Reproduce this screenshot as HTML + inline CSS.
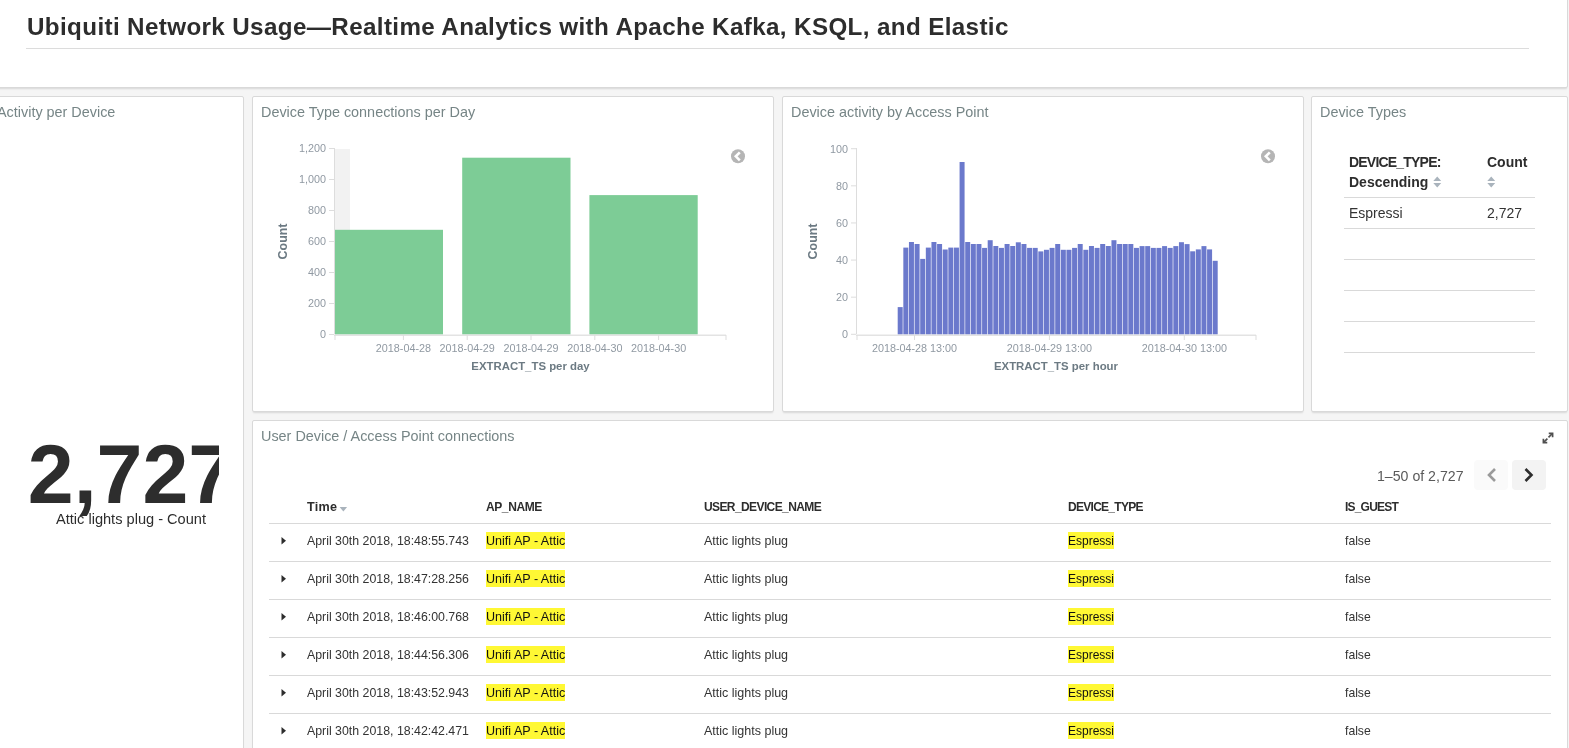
<!DOCTYPE html><html><head><meta charset="utf-8"><title>Ubiquiti Network Usage</title><style>
*{box-sizing:border-box;margin:0;padding:0}
html,body{width:1569px;height:748px;overflow:hidden;background:#F5F5F5;font-family:"Liberation Sans",sans-serif;}
.t,svg{will-change:transform}
.p{position:absolute;background:#fff;border:1px solid #D9D9D9;border-radius:2px;box-shadow:0 2px 2px -1px rgba(0,0,0,.12)}
.t{position:absolute;white-space:nowrap;line-height:1}
.ttl{font-size:14.4px;color:#768586}
.ln{position:absolute;height:1px;background:#D9D9D9}
.tick{fill:#9099A2;font-size:10.8px;font-family:"Liberation Sans",sans-serif}
.hdr{font-size:11px;font-weight:bold;color:#2D2D2D}
.cell{font-size:12.35px;color:#333}
mark{background:#FFF834;color:#111;padding:0}
</style></head><body><div class="p" style="left:-10px;top:-10px;width:1578px;height:98px"></div>
<div class="t " style="left:27.00px;top:14.51px;font-size:24.2px;font-weight:bold;color:#2D2D2D;letter-spacing:0.375px">Ubiquiti Network Usage—Realtime Analytics with Apache Kafka, KSQL, and Elastic</div>
<div class="ln" style="left:26px;top:48px;width:1503px;background:#DCDCDC"></div>
<div class="p" style="left:-10px;top:96px;width:254px;height:700px"></div>
<div class="t ttl" style="right:1454.00px;top:104.81px;font-size:14.4px;">Activity per Device</div>
<div style="position:absolute;left:0;top:420px;width:219px;height:100px;overflow:hidden"><div class="t" style="left:131.4px;top:13.36px;transform:translateX(-50%);font-size:82.5px;font-weight:bold;color:#2D2D2D">2,727</div></div>
<div class="t " style="left:131.00px;transform:translateX(-50%);top:511.64px;font-size:14.6px;color:#2D2D2D">Attic lights plug - Count</div>
<div class="p" style="left:252px;top:96px;width:522px;height:316px"></div><div class="t ttl" style="left:261.00px;top:104.81px;font-size:14.4px;">Device Type connections per Day</div>
<div class="p" style="left:782px;top:96px;width:522px;height:316px"></div><div class="t ttl" style="left:791.00px;top:104.81px;font-size:14.4px;">Device activity by Access Point</div>
<svg style="position:absolute;left:252px;top:96px" width="522" height="316"><rect x="83" y="53" width="15" height="185" fill="#F2F2F2"/><rect x="83.00" y="133.80" width="108.00" height="104.70" fill="#7DCC96"/><rect x="210.20" y="61.70" width="108.30" height="176.80" fill="#7DCC96"/><rect x="337.40" y="99.10" width="108.30" height="139.40" fill="#7DCC96"/><rect x="82" y="52" width="1" height="186" fill="#DDD"/><rect x="82" y="238.5" width="392" height="1.5" fill="#E3E3E3"/><rect x="77" y="238" width="5" height="1" fill="#DDD"/><text class="tick" x="74" y="242" text-anchor="end">0</text><rect x="77" y="207" width="5" height="1" fill="#DDD"/><text class="tick" x="74" y="211" text-anchor="end">200</text><rect x="77" y="176" width="5" height="1" fill="#DDD"/><text class="tick" x="74" y="180" text-anchor="end">400</text><rect x="77" y="145" width="5" height="1" fill="#DDD"/><text class="tick" x="74" y="149" text-anchor="end">600</text><rect x="77" y="114" width="5" height="1" fill="#DDD"/><text class="tick" x="74" y="118" text-anchor="end">800</text><rect x="77" y="83" width="5" height="1" fill="#DDD"/><text class="tick" x="74" y="87" text-anchor="end">1,000</text><rect x="77" y="52" width="5" height="1" fill="#DDD"/><text class="tick" x="74" y="56" text-anchor="end">1,200</text><rect x="82.50" y="239" width="1" height="5" fill="#DDD"/><rect x="150.90" y="239" width="1" height="5" fill="#DDD"/><rect x="214.70" y="239" width="1" height="5" fill="#DDD"/><rect x="278.50" y="239" width="1" height="5" fill="#DDD"/><rect x="342.30" y="239" width="1" height="5" fill="#DDD"/><rect x="406.10" y="239" width="1" height="5" fill="#DDD"/><rect x="473.50" y="239" width="1" height="5" fill="#DDD"/><text class="tick" x="151.40" y="255.80" text-anchor="middle">2018-04-28</text><text class="tick" x="215.20" y="255.80" text-anchor="middle">2018-04-29</text><text class="tick" x="279.00" y="255.80" text-anchor="middle">2018-04-29</text><text class="tick" x="342.80" y="255.80" text-anchor="middle">2018-04-30</text><text class="tick" x="406.60" y="255.80" text-anchor="middle">2018-04-30</text><text x="278.5" y="273.6" text-anchor="middle" style="font-family:'Liberation Sans';font-size:11.4px;font-weight:bold;fill:#6C7A83">EXTRACT_TS per day</text><text transform="translate(35.39999999999998,145.5) rotate(-90)" text-anchor="middle" style="font-family:'Liberation Sans';font-size:12.4px;font-weight:bold;fill:#6C7A83">Count</text><circle cx="486" cy="60.30000000000001" r="7" fill="#B5B5B5"/><path d="M487.79999999999995,56.30000000000001 L483.79999999999995,60.30000000000001 L487.79999999999995,64.30000000000001" stroke="#fff" stroke-width="2.6" fill="none"/></svg>
<svg style="position:absolute;left:782px;top:96px" width="522" height="316"><rect x="115.70" y="211.10" width="5" height="27.40" fill="#6B79CC"/><rect x="121.33" y="151.60" width="5" height="86.90" fill="#6B79CC"/><rect x="126.95" y="146.00" width="5" height="92.50" fill="#6B79CC"/><rect x="132.58" y="148.00" width="5" height="90.50" fill="#6B79CC"/><rect x="138.20" y="162.90" width="5" height="75.60" fill="#6B79CC"/><rect x="143.83" y="151.60" width="5" height="86.90" fill="#6B79CC"/><rect x="149.45" y="146.00" width="5" height="92.50" fill="#6B79CC"/><rect x="155.08" y="148.00" width="5" height="90.50" fill="#6B79CC"/><rect x="160.70" y="153.50" width="5" height="85.00" fill="#6B79CC"/><rect x="166.33" y="151.60" width="5" height="86.90" fill="#6B79CC"/><rect x="171.95" y="151.60" width="5" height="86.90" fill="#6B79CC"/><rect x="177.58" y="66.00" width="5" height="172.50" fill="#6B79CC"/><rect x="183.20" y="146.00" width="5" height="92.50" fill="#6B79CC"/><rect x="188.83" y="148.00" width="5" height="90.50" fill="#6B79CC"/><rect x="194.45" y="148.00" width="5" height="90.50" fill="#6B79CC"/><rect x="200.08" y="151.90" width="5" height="86.60" fill="#6B79CC"/><rect x="205.70" y="144.20" width="5" height="94.30" fill="#6B79CC"/><rect x="211.33" y="150.00" width="5" height="88.50" fill="#6B79CC"/><rect x="216.95" y="151.90" width="5" height="86.60" fill="#6B79CC"/><rect x="222.58" y="148.00" width="5" height="90.50" fill="#6B79CC"/><rect x="228.20" y="150.00" width="5" height="88.50" fill="#6B79CC"/><rect x="233.83" y="146.30" width="5" height="92.20" fill="#6B79CC"/><rect x="239.45" y="148.00" width="5" height="90.50" fill="#6B79CC"/><rect x="245.08" y="151.90" width="5" height="86.60" fill="#6B79CC"/><rect x="250.70" y="151.90" width="5" height="86.60" fill="#6B79CC"/><rect x="256.33" y="155.40" width="5" height="83.10" fill="#6B79CC"/><rect x="261.95" y="153.80" width="5" height="84.70" fill="#6B79CC"/><rect x="267.58" y="151.90" width="5" height="86.60" fill="#6B79CC"/><rect x="273.20" y="148.00" width="5" height="90.50" fill="#6B79CC"/><rect x="278.83" y="153.80" width="5" height="84.70" fill="#6B79CC"/><rect x="284.45" y="153.80" width="5" height="84.70" fill="#6B79CC"/><rect x="290.08" y="151.90" width="5" height="86.60" fill="#6B79CC"/><rect x="295.70" y="148.00" width="5" height="90.50" fill="#6B79CC"/><rect x="301.33" y="153.80" width="5" height="84.70" fill="#6B79CC"/><rect x="306.95" y="150.00" width="5" height="88.50" fill="#6B79CC"/><rect x="312.58" y="151.90" width="5" height="86.60" fill="#6B79CC"/><rect x="318.20" y="148.00" width="5" height="90.50" fill="#6B79CC"/><rect x="323.83" y="150.00" width="5" height="88.50" fill="#6B79CC"/><rect x="329.45" y="144.20" width="5" height="94.30" fill="#6B79CC"/><rect x="335.08" y="148.00" width="5" height="90.50" fill="#6B79CC"/><rect x="340.70" y="148.00" width="5" height="90.50" fill="#6B79CC"/><rect x="346.33" y="148.00" width="5" height="90.50" fill="#6B79CC"/><rect x="351.95" y="151.90" width="5" height="86.60" fill="#6B79CC"/><rect x="357.58" y="150.10" width="5" height="88.40" fill="#6B79CC"/><rect x="363.20" y="150.10" width="5" height="88.40" fill="#6B79CC"/><rect x="368.83" y="151.90" width="5" height="86.60" fill="#6B79CC"/><rect x="374.45" y="151.90" width="5" height="86.60" fill="#6B79CC"/><rect x="380.08" y="150.10" width="5" height="88.40" fill="#6B79CC"/><rect x="385.70" y="151.90" width="5" height="86.60" fill="#6B79CC"/><rect x="391.33" y="150.10" width="5" height="88.40" fill="#6B79CC"/><rect x="396.95" y="146.20" width="5" height="92.30" fill="#6B79CC"/><rect x="402.58" y="148.10" width="5" height="90.40" fill="#6B79CC"/><rect x="408.20" y="155.30" width="5" height="83.20" fill="#6B79CC"/><rect x="413.83" y="153.40" width="5" height="85.10" fill="#6B79CC"/><rect x="419.45" y="150.10" width="5" height="88.40" fill="#6B79CC"/><rect x="425.08" y="153.40" width="5" height="85.10" fill="#6B79CC"/><rect x="430.70" y="164.80" width="5" height="73.70" fill="#6B79CC"/><rect x="74" y="52" width="1" height="186" fill="#DDD"/><rect x="74" y="238.5" width="400" height="1.5" fill="#E3E3E3"/><rect x="69" y="237.80" width="5" height="1" fill="#DDD"/><text class="tick" x="66" y="242.30" text-anchor="end">0</text><rect x="69" y="200.68" width="5" height="1" fill="#DDD"/><text class="tick" x="66" y="205.18" text-anchor="end">20</text><rect x="69" y="163.56" width="5" height="1" fill="#DDD"/><text class="tick" x="66" y="168.06" text-anchor="end">40</text><rect x="69" y="126.44" width="5" height="1" fill="#DDD"/><text class="tick" x="66" y="130.94" text-anchor="end">60</text><rect x="69" y="89.32" width="5" height="1" fill="#DDD"/><text class="tick" x="66" y="93.82" text-anchor="end">80</text><rect x="69" y="52.20" width="5" height="1" fill="#DDD"/><text class="tick" x="66" y="56.70" text-anchor="end">100</text><rect x="74.50" y="239" width="1" height="5" fill="#DDD"/><rect x="132.00" y="239" width="1" height="5" fill="#DDD"/><rect x="266.90" y="239" width="1" height="5" fill="#DDD"/><rect x="401.80" y="239" width="1" height="5" fill="#DDD"/><rect x="473.50" y="239" width="1" height="5" fill="#DDD"/><text class="tick" x="132.50" y="255.80" text-anchor="middle">2018-04-28 13:00</text><text class="tick" x="267.40" y="255.80" text-anchor="middle">2018-04-29 13:00</text><text class="tick" x="402.30" y="255.80" text-anchor="middle">2018-04-30 13:00</text><text x="274" y="273.6" text-anchor="middle" style="font-family:'Liberation Sans';font-size:11.4px;font-weight:bold;fill:#6C7A83">EXTRACT_TS per hour</text><text transform="translate(35.39999999999998,145.5) rotate(-90)" text-anchor="middle" style="font-family:'Liberation Sans';font-size:12.4px;font-weight:bold;fill:#6C7A83">Count</text><circle cx="486" cy="60.30000000000001" r="7" fill="#B5B5B5"/><path d="M487.79999999999995,56.30000000000001 L483.79999999999995,60.30000000000001 L487.79999999999995,64.30000000000001" stroke="#fff" stroke-width="2.6" fill="none"/></svg>
<div class="p" style="left:1311px;top:96px;width:257px;height:316px"></div>
<div class="t ttl" style="left:1320.00px;top:104.81px;font-size:14.4px;">Device Types</div>
<div class="t " style="left:1348.70px;top:154.95px;font-size:14px;font-weight:bold;color:#2D2D2D;letter-spacing:-0.8px">DEVICE_TYPE:</div>
<div class="t " style="left:1348.90px;top:174.65px;font-size:14px;font-weight:bold;color:#2D2D2D">Descending</div>
<div class="t " style="left:1487.00px;top:154.95px;font-size:14px;font-weight:bold;color:#2D2D2D">Count</div>
<svg style="position:absolute;left:1433px;top:176px" width="9" height="12"><path d="M4.25,0.6 L8.2,5 L0.3,5 Z M0.3,7 L8.2,7 L4.25,11.4 Z" fill="#A9B3BC"/></svg>
<svg style="position:absolute;left:1486.6px;top:176px" width="9" height="12"><path d="M4.25,0.6 L8.2,5 L0.3,5 Z M0.3,7 L8.2,7 L4.25,11.4 Z" fill="#A9B3BC"/></svg>
<div class="ln" style="left:1344px;top:197px;width:191px"></div>
<div class="ln" style="left:1344px;top:228px;width:191px"></div>
<div class="ln" style="left:1344px;top:259px;width:191px"></div>
<div class="ln" style="left:1344px;top:290px;width:191px"></div>
<div class="ln" style="left:1344px;top:321px;width:191px"></div>
<div class="ln" style="left:1344px;top:352px;width:191px"></div>
<div class="t " style="left:1348.90px;top:206.15px;font-size:14px;color:#333">Espressi</div>
<div class="t " style="left:1487.00px;top:206.15px;font-size:14px;color:#333">2,727</div>
<div class="p" style="left:252px;top:420px;width:1316px;height:400px"></div>
<div class="t ttl" style="left:261.00px;top:428.61px;font-size:14.4px;">User Device / Access Point connections</div>
<svg style="position:absolute;left:1542px;top:432px" width="12" height="12"><g stroke="#505050" stroke-width="1.7" fill="none"><path stroke-linecap="square" d="M7.6,1.3 L10.6,1.3 L10.6,4.3 M1.4,7.6 L1.4,10.6 L4.4,10.6"/><path d="M10.4,1.5 L6.5,5.4 M1.6,10.4 L5.4,6.6"/></g></svg>
<div class="t " style="left:1376.80px;top:469.02px;font-size:14.15px;color:#5A5A5A">1–50 of 2,727</div>
<div style="position:absolute;left:1474px;top:460px;width:34px;height:30px;background:#FAFAFA;border-radius:4px"></div>
<div style="position:absolute;left:1512px;top:460px;width:34px;height:30px;background:#F3F3F3;border-radius:4px"></div>
<svg style="position:absolute;left:1474px;top:460px" width="34" height="30"><path d="M21,9 L15,15 L21,21" stroke="#9A9A9A" stroke-width="2.6" fill="none"/></svg>
<svg style="position:absolute;left:1512px;top:460px" width="34" height="30"><path d="M13.5,9 L19.5,15 L13.5,21" stroke="#2D2D2D" stroke-width="2.6" fill="none"/></svg>
<div class="t hdr" style="left:307.00px;top:500.63px;font-size:12.6px;letter-spacing:0.3px">Time</div>
<div class="t hdr" style="left:486.00px;top:501.14px;font-size:12px;letter-spacing:-0.4px">AP_NAME</div>
<div class="t hdr" style="left:704.00px;top:501.14px;font-size:12px;letter-spacing:-0.6px">USER_DEVICE_NAME</div>
<div class="t hdr" style="left:1068.00px;top:501.14px;font-size:12px;letter-spacing:-0.72px">DEVICE_TYPE</div>
<div class="t hdr" style="left:1345.00px;top:501.14px;font-size:12px;letter-spacing:-0.8px">IS_GUEST</div>
<svg style="position:absolute;left:339px;top:506px" width="9" height="7"><path d="M0.6,1.1 L8.1,1.1 L4.35,5.6 Z" fill="#A9B3BC"/></svg>
<div class="ln" style="left:269px;top:523px;width:1282px"></div>
<div class="ln" style="left:269px;top:561px;width:1282px"></div>
<div class="ln" style="left:269px;top:599px;width:1282px"></div>
<div class="ln" style="left:269px;top:637px;width:1282px"></div>
<div class="ln" style="left:269px;top:675px;width:1282px"></div>
<div class="ln" style="left:269px;top:713px;width:1282px"></div>
<svg style="position:absolute;left:281px;top:537px" width="6" height="8"><path d="M0.5,0 L5,3.75 L0.5,7.5 Z" fill="#2D2D2D"/></svg>
<div class="t cell" style="left:307.00px;top:534.95px;font-size:12.35px;">April 30th 2018, 18:48:55.743</div>
<div style="position:absolute;left:486px;top:532px;width:79px;height:17px;background:#FFF834"></div>
<div class="t " style="left:485.60px;top:534.78px;font-size:12.55px;color:#111">Unifi AP - Attic</div>
<div class="t cell" style="left:704.40px;top:534.82px;font-size:12.5px;">Attic lights plug</div>
<div style="position:absolute;left:1068px;top:532px;width:46px;height:17px;background:#FFF834"></div>
<div class="t " style="left:1067.60px;top:535.24px;font-size:12px;color:#111">Espressi</div>
<div class="t cell" style="left:1345.20px;top:535.07px;font-size:12.2px;">false</div>
<svg style="position:absolute;left:281px;top:575px" width="6" height="8"><path d="M0.5,0 L5,3.75 L0.5,7.5 Z" fill="#2D2D2D"/></svg>
<div class="t cell" style="left:307.00px;top:572.95px;font-size:12.35px;">April 30th 2018, 18:47:28.256</div>
<div style="position:absolute;left:486px;top:570px;width:79px;height:17px;background:#FFF834"></div>
<div class="t " style="left:485.60px;top:572.78px;font-size:12.55px;color:#111">Unifi AP - Attic</div>
<div class="t cell" style="left:704.40px;top:572.82px;font-size:12.5px;">Attic lights plug</div>
<div style="position:absolute;left:1068px;top:570px;width:46px;height:17px;background:#FFF834"></div>
<div class="t " style="left:1067.60px;top:573.24px;font-size:12px;color:#111">Espressi</div>
<div class="t cell" style="left:1345.20px;top:573.07px;font-size:12.2px;">false</div>
<svg style="position:absolute;left:281px;top:613px" width="6" height="8"><path d="M0.5,0 L5,3.75 L0.5,7.5 Z" fill="#2D2D2D"/></svg>
<div class="t cell" style="left:307.00px;top:610.95px;font-size:12.35px;">April 30th 2018, 18:46:00.768</div>
<div style="position:absolute;left:486px;top:608px;width:79px;height:17px;background:#FFF834"></div>
<div class="t " style="left:485.60px;top:610.78px;font-size:12.55px;color:#111">Unifi AP - Attic</div>
<div class="t cell" style="left:704.40px;top:610.82px;font-size:12.5px;">Attic lights plug</div>
<div style="position:absolute;left:1068px;top:608px;width:46px;height:17px;background:#FFF834"></div>
<div class="t " style="left:1067.60px;top:611.24px;font-size:12px;color:#111">Espressi</div>
<div class="t cell" style="left:1345.20px;top:611.07px;font-size:12.2px;">false</div>
<svg style="position:absolute;left:281px;top:651px" width="6" height="8"><path d="M0.5,0 L5,3.75 L0.5,7.5 Z" fill="#2D2D2D"/></svg>
<div class="t cell" style="left:307.00px;top:648.95px;font-size:12.35px;">April 30th 2018, 18:44:56.306</div>
<div style="position:absolute;left:486px;top:646px;width:79px;height:17px;background:#FFF834"></div>
<div class="t " style="left:485.60px;top:648.78px;font-size:12.55px;color:#111">Unifi AP - Attic</div>
<div class="t cell" style="left:704.40px;top:648.82px;font-size:12.5px;">Attic lights plug</div>
<div style="position:absolute;left:1068px;top:646px;width:46px;height:17px;background:#FFF834"></div>
<div class="t " style="left:1067.60px;top:649.24px;font-size:12px;color:#111">Espressi</div>
<div class="t cell" style="left:1345.20px;top:649.07px;font-size:12.2px;">false</div>
<svg style="position:absolute;left:281px;top:689px" width="6" height="8"><path d="M0.5,0 L5,3.75 L0.5,7.5 Z" fill="#2D2D2D"/></svg>
<div class="t cell" style="left:307.00px;top:686.95px;font-size:12.35px;">April 30th 2018, 18:43:52.943</div>
<div style="position:absolute;left:486px;top:684px;width:79px;height:17px;background:#FFF834"></div>
<div class="t " style="left:485.60px;top:686.78px;font-size:12.55px;color:#111">Unifi AP - Attic</div>
<div class="t cell" style="left:704.40px;top:686.82px;font-size:12.5px;">Attic lights plug</div>
<div style="position:absolute;left:1068px;top:684px;width:46px;height:17px;background:#FFF834"></div>
<div class="t " style="left:1067.60px;top:687.24px;font-size:12px;color:#111">Espressi</div>
<div class="t cell" style="left:1345.20px;top:687.07px;font-size:12.2px;">false</div>
<svg style="position:absolute;left:281px;top:727px" width="6" height="8"><path d="M0.5,0 L5,3.75 L0.5,7.5 Z" fill="#2D2D2D"/></svg>
<div class="t cell" style="left:307.00px;top:724.95px;font-size:12.35px;">April 30th 2018, 18:42:42.471</div>
<div style="position:absolute;left:486px;top:722px;width:79px;height:17px;background:#FFF834"></div>
<div class="t " style="left:485.60px;top:724.78px;font-size:12.55px;color:#111">Unifi AP - Attic</div>
<div class="t cell" style="left:704.40px;top:724.82px;font-size:12.5px;">Attic lights plug</div>
<div style="position:absolute;left:1068px;top:722px;width:46px;height:17px;background:#FFF834"></div>
<div class="t " style="left:1067.60px;top:725.24px;font-size:12px;color:#111">Espressi</div>
<div class="t cell" style="left:1345.20px;top:725.07px;font-size:12.2px;">false</div></body></html>
